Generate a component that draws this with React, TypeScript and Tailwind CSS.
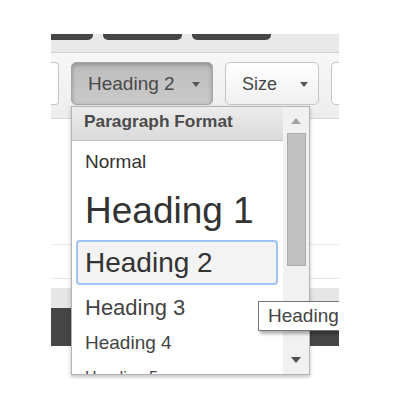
const items = [
  { label: "Normal", h: "h-[44px]", text: "text-[19px]" },
  { label: "Heading 1", h: "h-[52px]", text: "text-[37px]" },
];

const Arrow = ({ color = "#555" }: { color?: string }) => (
  <svg width="8" height="5" viewBox="0 0 8 5">
    <path d="M0 0 L8 0 L4 5 Z" fill={color} />
  </svg>
);

const App = () => {
  return (
    <div className="w-[400px] h-[405px] bg-white pl-[51px] pt-[34px] font-['Liberation_Sans',Arial,sans-serif]">
      <div className="relative w-[288px] h-[345px] overflow-hidden bg-white">
        {/* top strip */}
        <div className="flex h-[18px] bg-[#e9e9e9] gap-[10px]">
          <div className="w-[42px] h-[6px] shrink-0 bg-[#464646] rounded-br-[5px]"></div>
          <div className="w-[79px] h-[6px] shrink-0 bg-[#464646] rounded-b-[5px]"></div>
          <div className="w-[79px] h-[6px] shrink-0 bg-[#464646] rounded-b-[5px]"></div>
        </div>
        <div className="h-px bg-[#cfcfcf]"></div>

        {/* toolbar */}
        <div className="flex h-[66px] pt-[9px] gap-[12px] bg-gradient-to-b from-[#f7f7f7] to-[#ededed] border-b border-[#d6d6d6]">
          <div className="w-[8px] h-[43px] shrink-0 bg-white border border-l-0 border-[#c4c4c4] rounded-r-[4px]"></div>
          <div className="flex items-center shrink-0 w-[142px] h-[43px] pl-[16px] pr-[12px] pt-[1px] rounded-[5px] border border-[#a6a6a6] bg-gradient-to-b from-[#bdbdbd] to-[#c9c9c9] shadow-[inset_0_2px_4px_rgba(0,0,0,0.25)] text-[#4a4a4a] text-[19px]">
            <span>Heading 2</span>
            <span className="ml-auto pt-[1px]"><Arrow /></span>
          </div>
          <div className="flex items-center shrink-0 w-[94px] h-[43px] pl-[16px] pr-[10px] pt-[1px] rounded-[5px] border border-[#c6c6c6] bg-gradient-to-b from-white to-[#f0f0f0] text-[#474747] text-[18px]">
            <span>Size</span>
            <span className="ml-auto pt-[1px]"><Arrow /></span>
          </div>
          <div className="w-[20px] h-[43px] shrink-0 rounded-l-[5px] border border-r-0 border-[#c6c6c6] bg-white"></div>
        </div>

        {/* editor area */}
        <div className="h-[126px] bg-white border-b border-[#ece6e6]"></div>
        <div className="h-[34px] bg-white border-b border-[#eee2e2]"></div>
        <div className="h-[9px] bg-white"></div>
        <div className="h-[20px] bg-[#e6e6e7]"></div>
        <div className="h-[38px] bg-[#464646]"></div>

        {/* dropdown */}
        <div className="absolute left-[20px] top-[72px] w-[239px] h-[269px] bg-white border border-[#b4b4b4] shadow-[0_2px_4px_rgba(0,0,0,0.25)] flex overflow-hidden">
          <div className="flex-1 flex flex-col">
            <div className="h-[34px] shrink-0 flex items-center pl-[12px] pb-[3px] bg-gradient-to-b from-[#ececec] to-[#dadada] border-b border-[#c2c2c2] text-[17.3px] font-bold text-[#4b4b4b]">
              Paragraph Format
            </div>
            {items.map((it) => (
              <div key={it.label} className={`${it.h} shrink-0 flex items-center pl-[13px] pb-[1px] text-[#333] ${it.text}`}>
                {it.label}
              </div>
            ))}
            <div className="h-[52px] shrink-0 pt-[3px] pl-[4px] pr-[5px]">
              <div className="h-[45px] flex items-center pl-[7px] bg-[#f3f3f3] border-2 border-[#9fc3f3] rounded-[4px] text-[28px] text-[#333]">
                Heading 2
              </div>
            </div>
            <div className="h-[38px] shrink-0 flex items-center pl-[13px] pb-[2px] text-[22px] text-[#444]">Heading 3</div>
            <div className="h-[32px] shrink-0 flex items-center pl-[13px] text-[19px] text-[#444]">Heading 4</div>
            <div className="h-[38px] shrink-0 flex items-center pl-[13px] text-[16px] text-[#444]">Heading 5</div>
          </div>
          {/* scrollbar */}
          <div className="w-[26px] shrink-0 bg-[#f1f1f1] flex flex-col items-center">
            <div className="h-[26px] flex items-center pt-[1px]">
              <svg width="10" height="6" viewBox="0 0 10 6">
                <path d="M0 6 L10 6 L5 0 Z" fill="#a3a3a3" />
              </svg>
            </div>
            <div className="w-[19px] h-[133px] bg-[#c1c1c1] border border-[#ababab]"></div>
            <div className="flex-1"></div>
            <div className="h-[28px] flex items-center">
              <svg width="10" height="6" viewBox="0 0 10 6">
                <path d="M0 0 L10 0 L5 6 Z" fill="#505050" />
              </svg>
            </div>
          </div>
        </div>

        {/* tooltip */}
        <div className="absolute left-[207px] top-[267px] w-[110px] h-[30px] bg-white border border-[#767676] shadow-[2px_3px_3px_rgba(0,0,0,0.3)] flex items-center pl-[9px] text-[19px] text-[#444]">
          Heading
        </div>
      </div>
    </div>
  );
};

export default App;
